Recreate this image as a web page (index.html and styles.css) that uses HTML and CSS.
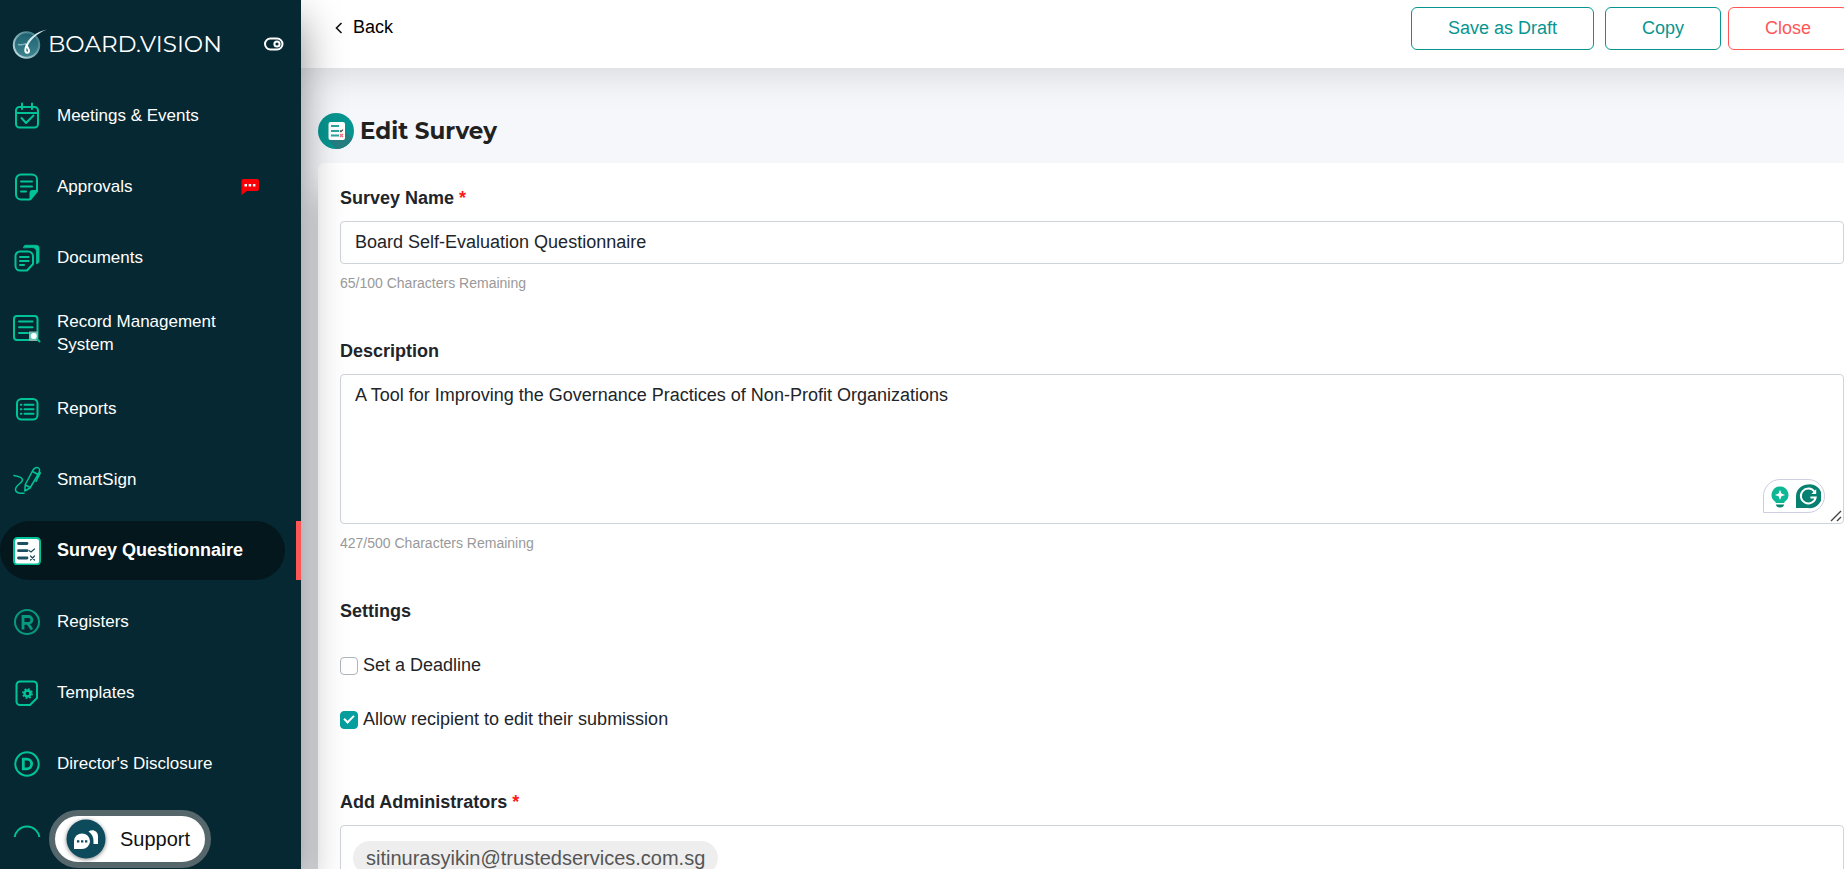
FILE: index.html
```html
<!DOCTYPE html>
<html lang="en">
<head>
<meta charset="utf-8">
<meta name="viewport" content="width=device-width, initial-scale=1">
<title>Edit Survey - Board.Vision</title>
<link rel="stylesheet" href="styles.css">
</head>
<body>
<div class="app">
  <aside class="sidebar">
    <div class="brand">
      <svg class="brand-mark" width="36" height="32" viewBox="0 0 36 32" aria-hidden="true">
        <defs>
          <linearGradient id="globe" x1="0" y1="0" x2="0" y2="1"><stop offset="0" stop-color="#1f5f6e"/><stop offset="1" stop-color="#3d8590"/></linearGradient>
          <linearGradient id="rim" x1="1" y1="0" x2="0" y2="1"><stop offset="0" stop-color="#2c6f7c"/><stop offset="1" stop-color="#c5e4e6"/></linearGradient>
        </defs>
        <circle cx="14.500" cy="17" r="12.700" fill="url(#globe)" stroke="url(#rim)" stroke-width="2"/>
        <path d="M6 16.500c3.500.5 6 .5 8-1" stroke="#7fb6bf" stroke-width="1.300" fill="none"/>
        <path d="M35 1.500C25 3.500 15.500 10 13.200 19l2 1C17.500 12 25 5.500 35 1.500z" fill="#d9edf0"/>
        <path d="M14.200 18c-1.200 3-1.500 6.500.8 6.800 2.300.2 2.600-2.300 1.200-4.300-.8-1.200-1.600-2.500-1.700-4.500" fill="none" stroke="#fff" stroke-width="2"/>
      </svg>
      <span class="brand-name">BOARD.VISION</span>
      <button class="toggle" type="button" aria-label="Collapse menu">
        <svg width="20" height="14" viewBox="0 0 20 14" fill="none" stroke="#fff" stroke-width="2"><rect x="1" y="1.500" width="17.500" height="11" rx="5.500"/><circle cx="13" cy="7" r="2.600"/></svg>
      </button>
    </div>
    <nav class="nav" aria-label="Main">
      <ul class="nav-list">
        <li class="nav-item"><a class="nav-link" href="#meetings">
          <svg class="icon" viewBox="0 0 28 28"><rect x="3" y="5" width="22" height="20.500" rx="3.500"/><path d="M3 11h22M9 1.500V7M19 1.500V7M8.500 16l4.500 5 7.500-7.500"/></svg>
          <span>Meetings &amp; Events</span></a></li>
        <li class="nav-item"><a class="nav-link" href="#approvals">
          <svg class="icon" viewBox="0 0 28 28"><path d="M24 17.500V6.500a5 5 0 0 0-5-5H8a5 5 0 0 0-5 5v15a5 5 0 0 0 5 5h9z"/><path d="M8 8.500h11M8 13.500h11M8 18.500h5"/><path d="M24 18h-4.500a2 2 0 0 0-2 2v6z" fill="#00c39a"/></svg>
          <span>Approvals</span>
          <svg class="alert" width="18" height="16" viewBox="0 0 18 16" aria-label="New comments"><path d="M2 0h14a2 2 0 0 1 2 2v8a2 2 0 0 1-2 2H6l-5.500 4V2A2 2 0 0 1 2 0z" fill="#fb0007"/><path d="M3.500 5h2.500v2.500H3.500zM7.700 5h2.500v2.500H7.700zM11.900 5h2.500v2.500h-2.500z" fill="#fff"/></svg>
        </a></li>
        <li class="nav-item"><a class="nav-link" href="#documents">
          <svg class="icon" viewBox="0 0 28 28"><path d="M7 7.500h8a5 5 0 0 1 5 5V20l-6 6.500H7A4.500 4.500 0 0 1 2.500 22V12A4.500 4.500 0 0 1 7 7.500z"/><path d="M7 13h8.500M7 17h8.500M7 21h4"/><path d="M10.500 3.500C11 1.500 12 1.300 13 1.300h10c2.500 0 3 1.200 3 3v13c0 1.500-1 2.200-2.500 2.500V8c0-3-1.500-4.500-4.500-4.500z" fill="#00c39a" stroke-width=".8"/></svg>
          <span>Documents</span></a></li>
        <li class="nav-item nav-item-tall"><a class="nav-link nav-link-raised" href="#records">
          <svg class="icon" viewBox="0 0 28 28"><rect x="1" y="1" width="23.500" height="24" rx="3"/><path d="M6 6.500h13.500M6 12.300h13.500M6 18h9"/><path d="M16 16.500h9v9.500h-9z" fill="#8fb0a5" stroke="none"/><circle cx="20.800" cy="21" r="3.600" fill="#fff" stroke="#00c39a" stroke-width=".6"/><path d="M24.500 24.500l2 2"/></svg>
          <span>Record Management System</span></a></li>
        <li class="nav-item"><a class="nav-link" href="#reports">
          <svg class="icon" viewBox="0 0 28 28"><rect x="4" y="4" width="20.500" height="20.500" rx="4.500"/><path d="M11.500 9.700h9M11.500 14.200h9M11.500 18.800h9M7.800 9.700h.6M7.800 14.200h.6M7.800 18.800h.6"/></svg>
          <span>Reports</span></a></li>
        <li class="nav-item"><a class="nav-link" href="#smartsign">
          <svg class="icon icon-thin" viewBox="0 0 28 28"><path d="M1 9.500c3 .5 8.500 1.500 8.500 4.500 0 3-7 5-7 9.500 0 3.500 4 4 8.500 3.800"/><path d="M11.800 25l.5-6.500L20 4c1.500-2.500 4-3 5.500-2s1 4-.5 6.500l-8 13.500zM12.500 19l4.500 2.500M19.500 5.500l5.500 3M26.500 6l.8 1-4.300 8.500"/></svg>
          <span>SmartSign</span></a></li>
        <li class="nav-item nav-item-active"><a class="nav-link" href="#survey" aria-current="page">
          <svg class="icon" viewBox="0 0 28 28"><rect x="1" y="1" width="26" height="26.500" rx="3.500" fill="#fff"/><g stroke="#1d4f60"><path d="M5.500 6.500h8.500M5.500 13.700h8.500M5.500 21h8.500" stroke-width="2.800"/><path d="M16 13.500l2 1.500 3.500-3M17.500 19l4 4M21.500 19l-4 4" stroke-width="1.200"/></g></svg>
          <span>Survey Questionnaire</span></a></li>
        <li class="nav-item"><a class="nav-link" href="#registers">
          <svg class="icon icon-dark" viewBox="0 0 28 28"><circle cx="14" cy="14" r="12"/><path d="M10 21.500V8.500h5.500a3.400 3.400 0 0 1 0 6.800H10M14.800 15.500l4.200 6" stroke-width="2.800" stroke-linecap="butt" stroke-linejoin="miter"/></svg>
          <span>Registers</span></a></li>
        <li class="nav-item"><a class="nav-link" href="#templates">
          <svg class="icon" viewBox="0 0 28 28"><path d="M7 2.500h13.500a3.500 3.500 0 0 1 3.500 3.500v13l-7 7H7a3.500 3.500 0 0 1-3.500-3.500V6A3.500 3.500 0 0 1 7 2.500z"/><circle cx="14.500" cy="14.500" r="3" stroke-width="2.600"/><circle cx="14.500" cy="14.500" r="4.600" stroke-width="1.600" stroke-dasharray="1.800 1.810" stroke-linecap="butt"/></svg>
          <span>Templates</span></a></li>
        <li class="nav-item"><a class="nav-link" href="#disclosure">
          <svg class="icon" viewBox="0 0 28 28"><circle cx="14" cy="14" r="11.700"/><path d="M10.300 9.200h3.500a4.800 4.800 0 0 1 0 9.600h-3.500z" stroke-width="2.800" stroke-linejoin="miter"/></svg>
          <span>Director's Disclosure</span></a></li>
        <li class="nav-item nav-item-tall"><a class="nav-link" href="#more" aria-label="More">
          <svg class="icon" viewBox="0 0 28 28"><circle cx="14" cy="14" r="12.500"/></svg></a></li>
      </ul>
    </nav>
    <button class="support" type="button">
      <svg class="support-icon" width="40" height="40" viewBox="0 0 40 40" aria-hidden="true"><circle cx="20" cy="20" r="19.500" fill="#0c4a5c"/><path d="M22.500 12.500c4-3 9.500-.5 9.500 4.500v8h-4.500v-3c0-4-1.500-7-5-9.500z" fill="#fff"/><path d="M8 30v-8a8 7.800 0 1 1 8 8z" fill="#fff"/><path d="M11 21.300h2.300v2.300H11zM15 21.300h2.300v2.300H15zM19 21.300h2.300v2.300H19z" fill="#0c4a5c"/></svg>
      <span>Support</span>
    </button>
  </aside>

  <div class="page">
    <header class="topbar">
      <a class="back" href="#back">
        <svg width="8" height="12" viewBox="0 0 8 12" aria-hidden="true"><path d="M6.500 1L1.500 6l5 5" fill="none" stroke="#111" stroke-width="1.600"/></svg>
        <span>Back</span>
      </a>
      <div class="actions">
        <button class="btn btn-spaced" type="button">Save as Draft</button>
        <button class="btn" type="button">Copy</button>
        <button class="btn btn-danger" type="button">Close</button>
      </div>
    </header>
    <main class="content">
      <div class="title">
        <svg width="36" height="36" viewBox="0 0 36 36" aria-hidden="true"><defs><clipPath id="disc"><circle cx="18" cy="18" r="18"/></clipPath></defs><g clip-path="url(#disc)"><path d="M0 0h36v36H0z" fill="#069590"/><path d="M27 18l11 11v9H20l-9-11z" fill="#257e80"/></g><rect x="10.500" y="9" width="16.500" height="18" rx="2" fill="#fff"/><path d="M13 13h8M13 18h8M13 22.500h8" stroke="#2ca5a2" stroke-width="2"/><path d="M22 17.500l1 1.200 2-2" stroke="#444" stroke-width="1.200" fill="none"/><path d="M22 21l3 3M25 21l-3 3" stroke="#fb7078" stroke-width="1.400"/></svg>
        <h1>Edit Survey</h1>
      </div>
      <form class="card">
        <div class="field">
          <label class="label" for="survey-name">Survey Name <span class="required">*</span></label>
          <input class="control" id="survey-name" type="text" value="Board Self-Evaluation Questionnaire">
          <p class="hint">65/100 Characters Remaining</p>
        </div>
        <div class="field">
          <label class="label" for="description">Description</label>
          <div class="editor">
            <textarea class="control area" id="description">A Tool for Improving the Governance Practices of Non-Profit Organizations</textarea>
            <div class="assistant">
              <svg width="18" height="22" viewBox="0 0 18 22" aria-hidden="true"><path d="M9 .5a8.300 8.300 0 0 0-5 15c.6.5.8 1 .8 1.500h8.400c0-.5.200-1 .8-1.500A8.300 8.300 0 0 0 9 .5z" fill="#0bb795"/><path d="M5 18.500h8c0 2-1.500 3-4 3s-4-1-4-3z" fill="#078571"/><path d="M9 3.800l1.400 3.700 3.700 1.400-3.700 1.400L9 14l-1.400-3.700-3.700-1.400 3.700-1.400z" fill="#fff"/></svg>
              <svg width="26" height="25" viewBox="0 0 26 26" aria-hidden="true"><path d="M13 .5A12.400 12.400 0 1 1 13 25H.5V13A12.500 12.500 0 0 1 13 .5z" fill="#068070"/><path d="M19.800 8A7.800 7.800 0 1 0 21 14h-5.500" fill="none" stroke="#fff" stroke-width="2"/><path d="M21.500 5.500v5h-5z" fill="#fff"/></svg>
            </div>
            <svg class="grip" width="12" height="12" viewBox="0 0 12 12" aria-hidden="true"><path d="M1 11L11 1M7 11l4-4" stroke="#444" stroke-width="1.400"/></svg>
          </div>
          <p class="hint">427/500 Characters Remaining</p>
        </div>
        <fieldset class="settings">
          <legend class="label">Settings</legend>
          <label class="check"><input class="box" type="checkbox"><span>Set a Deadline</span></label>
          <label class="check"><input class="box" type="checkbox" checked><span>Allow recipient to edit their submission</span></label>
        </fieldset>
        <div class="field">
          <label class="label" for="admins">Add Administrators <span class="required">*</span></label>
          <div class="control tags">
            <span class="tag">sitinurasyikin@trustedservices.com.sg</span>
            <input class="tag-input" id="admins" type="text">
          </div>
        </div>
      </form>
    </main>
  </div>
</div>
</body>
</html>
```
FILE: styles.css
```css
* { box-sizing: border-box; }

body {
  margin: 0;
  font-family: "Liberation Sans", Arial, sans-serif;
  font-size: 18px;
  line-height: 27px;
  color: #212529;
}

button, input, textarea { font: inherit; color: inherit; }
a { color: inherit; text-decoration: none; }

.app { display: flex; height: 100vh; overflow: hidden; }

/* Sidebar */
.sidebar {
  position: relative;
  z-index: 2;
  flex: 0 0 301px;
  display: flex;
  flex-direction: column;
  padding-bottom: 32px;
  background: #062832;
  color: #fff;
  box-shadow: 0 20px 40px rgba(0, 0, 0, 0.45);
}

.brand { display: flex; align-items: center; height: 86px; padding: 2px 17px 0 12px; }
.brand-name { flex: 1; font-family: Montserrat, Inter, sans-serif; font-size: 23px; }
.brand-mark { flex: none; }
.toggle { display: flex; padding: 0; border: 0; background: none; }

.nav { flex: 1; min-height: 0; overflow: hidden; }
.nav-list { display: grid; gap: 12px; margin: 0; padding: 0; list-style: none; }
.nav-item { display: flex; height: 59px; padding-right: 16px; font-size: 17px; line-height: 23px; }
.nav-item-tall { height: 68px; }
.nav-item-active { padding-right: 11px; border-right: 5px solid #ff5656; font-size: 18px; font-weight: bold; }
.nav-link { flex: 1; display: flex; align-items: center; gap: 16px; padding: 0 26px 0 13px; border-radius: 30px; }
.nav-link-raised .icon { margin-bottom: 8px; }
.nav-item-active .nav-link { background: #03171d; }

.icon {
  flex: none;
  width: 28px;
  height: 28px;
  fill: none;
  stroke: #00c39a;
  stroke-width: 2;
  stroke-linecap: round;
  stroke-linejoin: round;
}
.icon-thin { stroke-width: 1.5; }
.icon-dark { stroke: #079a80; }
.alert { margin-left: auto; }

.support {
  position: absolute;
  left: 49px;
  bottom: 1px;
  display: flex;
  align-items: center;
  gap: 14px;
  padding: 3px 15px 3px 11px;
  border: 6px solid #56676c;
  border-radius: 30px;
  background: #fff;
  color: #111;
  font-size: 20px;
}
.support-icon { filter: drop-shadow(0 1px 2px rgba(0, 0, 0, 0.5)); }

/* Page */
.page { flex: 1; min-width: 0; display: flex; flex-direction: column; background: #f5f7fb; }

/* The bar runs past the window edge so that its shadow stays even */
.topbar {
  position: relative;
  z-index: 1;
  flex: none;
  display: flex;
  justify-content: space-between;
  align-items: flex-start;
  height: 68px;
  margin-right: -40px;
  padding: 7px 36px 0 34px;
  background: #fff;
  box-shadow: 0 4px 40px rgba(0, 0, 0, 0.14);
}
.back { display: flex; align-items: center; gap: 10px; padding-top: 7px; color: #000; }

.actions { display: flex; gap: 7px; }
.btn { height: 43px; padding: 0 36px; border: 1px solid #069590; border-radius: 6px; background: #fff; color: #069590; }
.btn-spaced { margin-right: 4px; }
.btn-danger { border-color: #ff5656; color: #ff5656; }

.content { flex: 1; min-height: 0; padding: 45px 0 0 17px; }
.title { display: flex; align-items: center; gap: 6px; margin-bottom: 14px; }
.title svg { display: block; }
.title h1 { margin: 0; font-family: Montserrat, Inter, sans-serif; font-size: 23px; line-height: 36px; font-weight: 700; color: #212121; }

.card {
  padding: 22px 0 22px 22px;
  border-radius: 6px 0 0 0;
  background: #fff;
  box-shadow: 0 30px 30px rgba(0, 0, 0, 0.24);
}
.field { margin-bottom: 44px; }
.label { display: block; margin-bottom: 9px; padding: 0; font-weight: bold; }
.required { color: #ff1a1a; }

.control {
  display: block;
  width: 100%;
  height: 43px;
  padding: 7px 14px;
  border: 1px solid #ced4da;
  border-radius: 4px;
  background: #fff;
  outline: 0;
}
.editor { position: relative; }
.area { height: 150px; resize: none; }
.hint { margin: 8px 0 0; font-size: 14px; line-height: 22px; color: #999; }

.assistant {
  position: absolute;
  right: 19px;
  bottom: 11px;
  display: flex;
  align-items: center;
  gap: 6px;
  padding: 4px 3px 3px 7px;
  border: 1px solid #cdcee0;
  border-radius: 17px 17px 17px 0;
  background: #fff;
}
.grip { position: absolute; right: 2px; bottom: 2px; }

.settings { display: grid; gap: 27px; margin: 0 0 56px; padding: 0; border: 0; }
.settings .label { margin-bottom: 27px; }
.check { display: flex; align-items: center; gap: 5px; }
.box {
  appearance: none;
  width: 18px;
  height: 18px;
  margin: 0;
  border: 1px solid #adb5bd;
  border-radius: 4px;
  background: #fff;
}
.box:checked {
  display: grid;
  place-items: center;
  border-color: #069e9e;
  background: #069e9e;
}
.box:checked::before {
  content: "";
  width: 8px;
  height: 4px;
  margin-bottom: 3px;
  border: solid #fff;
  border-width: 0 0 2px 2px;
  transform: rotate(-45deg);
}

.tags { display: flex; align-items: flex-start; height: auto; min-height: 70px; padding: 15px 12px; }
.tag { padding: 4px 13px; border-radius: 20px; background: #eee; color: #555; font-size: 20px; line-height: 26px; }
.tag-input { flex: 1; min-width: 0; border: 0; outline: 0; background: none; }
```
